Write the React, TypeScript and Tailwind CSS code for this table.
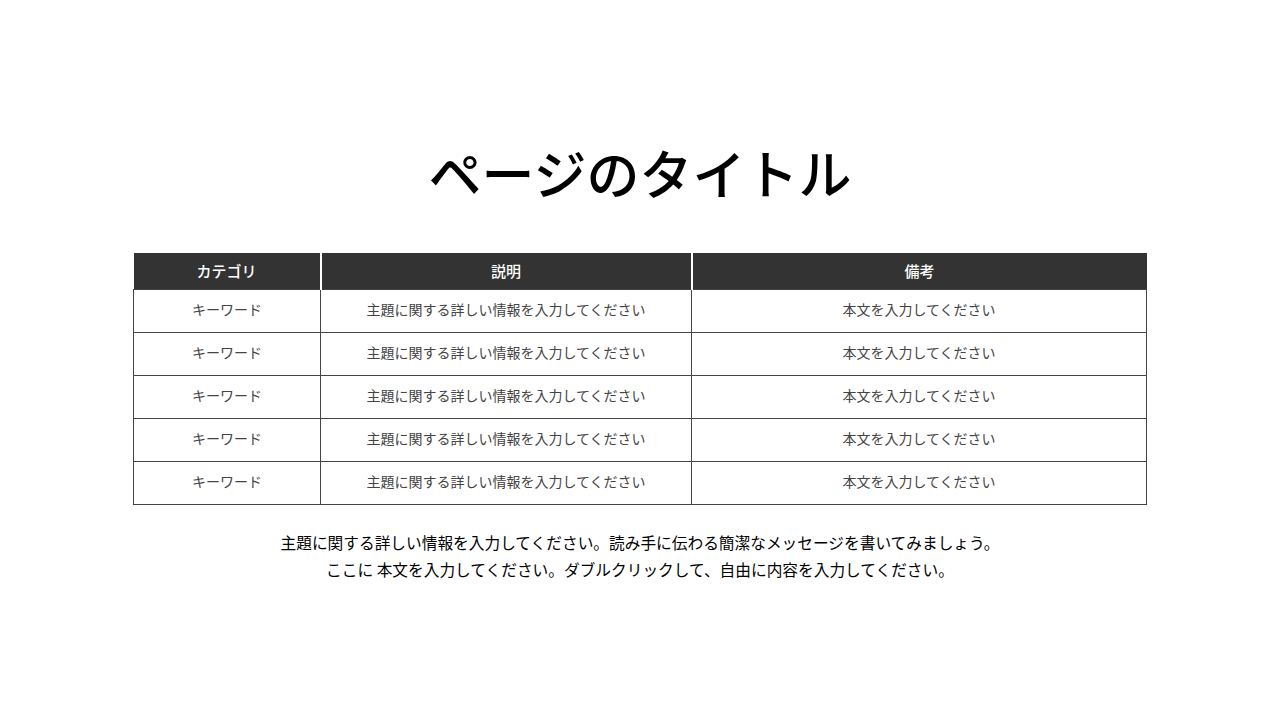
import React from "react";

const rows = Array.from({ length: 5 });

export default function App() {
  return (
    <div
      className="w-[1280px] h-[720px] bg-white flex flex-col items-center"
      style={{ fontFamily: '"Noto Sans CJK JP", "Noto Sans", sans-serif' }}
    >
      <h1 className="mt-[146px] text-[53px] leading-none font-medium text-black">
        ページのタイトル
      </h1>
      <table className="mt-[54px] w-[1013px] border-collapse table-fixed text-[14px] text-[#444]">
        <colgroup>
          <col className="w-[187px]" />
          <col className="w-[371px]" />
          <col className="w-[455px]" />
        </colgroup>
        <thead>
          <tr className="h-[36px] bg-[#333] text-white text-[15px]">
            <th className="font-medium border-r-2 border-white">カテゴリ</th>
            <th className="font-medium border-r-2 border-white">説明</th>
            <th className="font-medium">備考</th>
          </tr>
        </thead>
        <tbody>
          {rows.map((_, i) => (
            <tr key={i} className="h-[43px]">
              <td className="border border-[#444] text-center pb-[2px]">キーワード</td>
              <td className="border border-[#444] text-center pb-[2px]">主題に関する詳しい情報を入力してください</td>
              <td className="border border-[#444] text-center pb-[2px]">本文を入力してください</td>
            </tr>
          ))}
        </tbody>
      </table>
      <div className="mt-[24px] text-[15.7px] leading-[27px] text-black text-center">
        <p>主題に関する詳しい情報を入力してください。読み手に伝わる簡潔なメッセージを書いてみましょう。</p>
        <p>ここに 本文を入力してください。ダブルクリックして、自由に内容を入力してください。</p>
      </div>
    </div>
  );
}
